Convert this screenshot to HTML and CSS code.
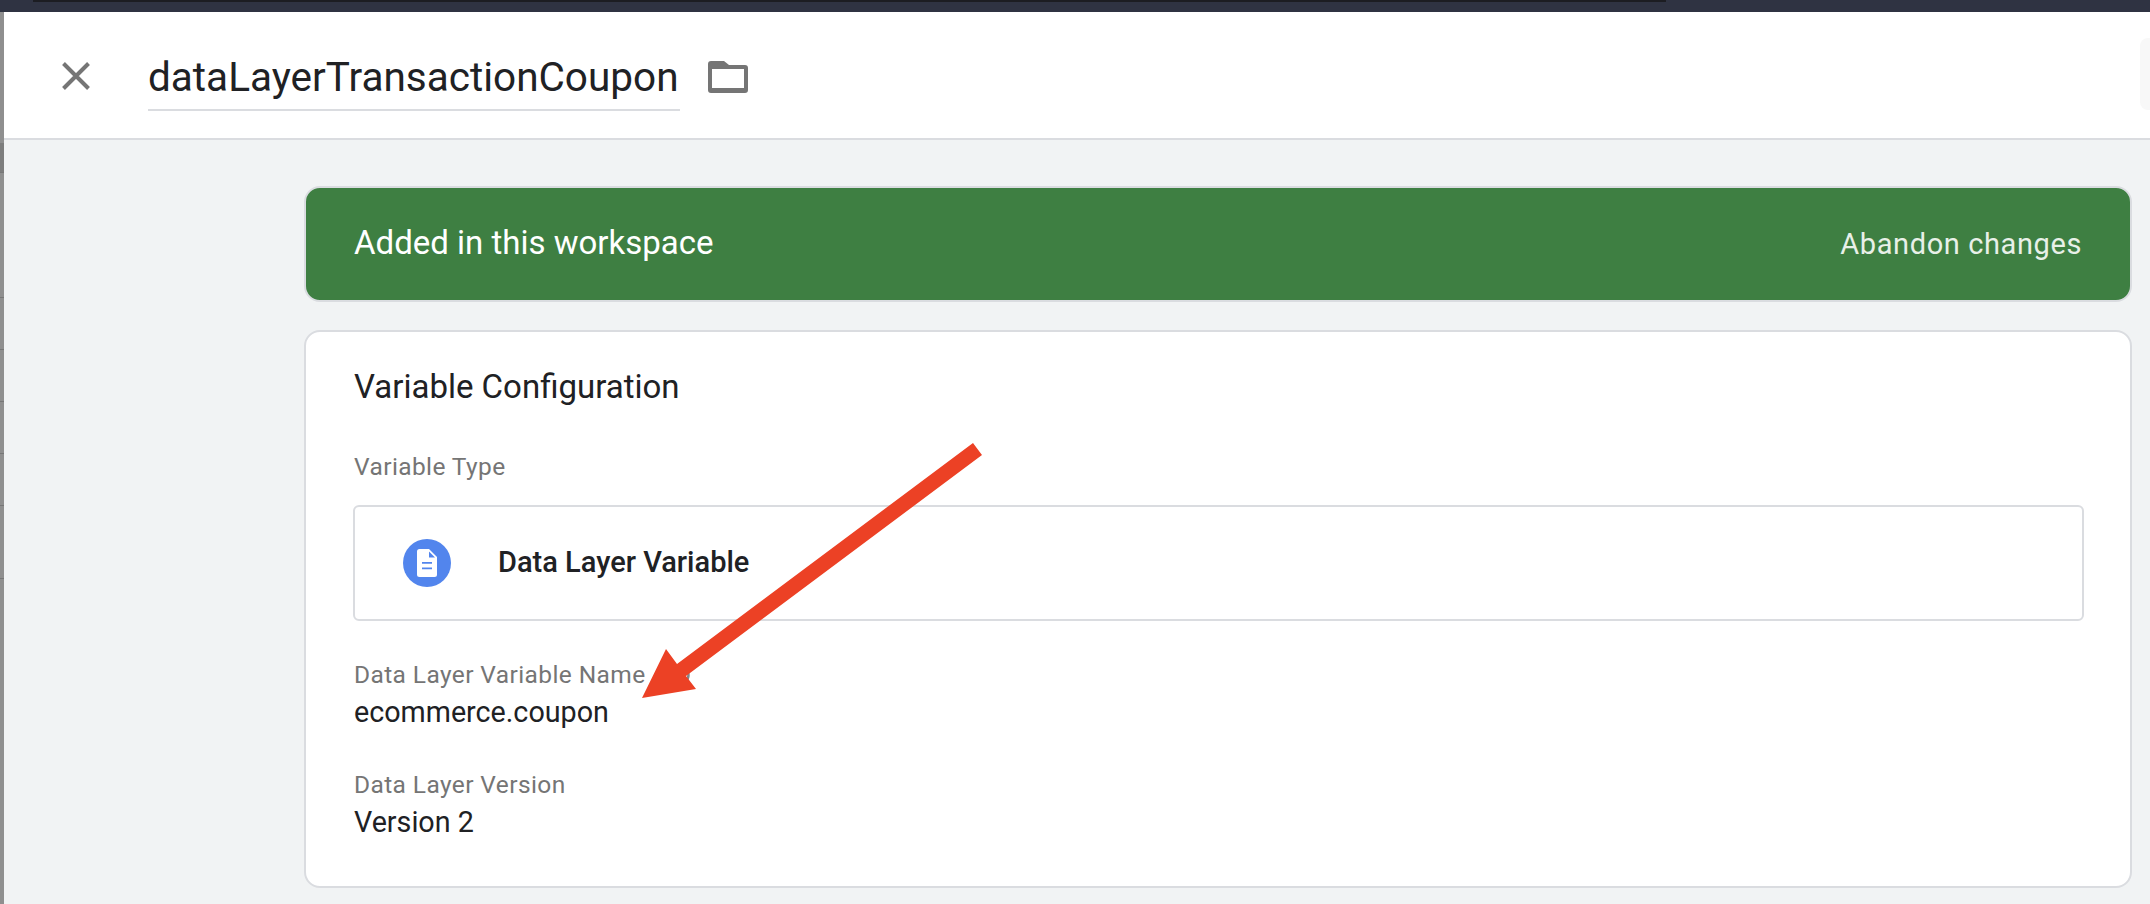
FILE: index.html
```html
<!DOCTYPE html>
<html lang="en">
<head>
    <meta charset="UTF-8">
    <meta name="viewport" content="width=device-width, initial-scale=1.0">
    <title>dataLayerTransactionCoupon</title>
    <link rel="stylesheet" href="styles.css">
</head>
<body>
    <div class="topbar"><div class="topbar-edge"></div></div>
    <div class="page">
        <div class="backdrop">
            <i></i><i></i><i></i><i></i><i></i><i></i><i></i>
        </div>
        <div class="sheet">
            <header class="sheet-header">
                <svg class="close-icon" viewBox="0 0 30 30">
                    <path d="M2.500 2.500 L27.500 27.500 M27.500 2.500 L2.500 27.500" fill="none" stroke="#757575" stroke-width="4"/>
                </svg>
                <div class="name-field">dataLayerTransactionCoupon</div>
                <svg class="folder-icon" viewBox="0 0 40 32">
                    <path d="M3 0 H16 L21 4 H37 A3 3 0 0 1 40 7 V29 A3 3 0 0 1 37 32 H3 A3 3 0 0 1 0 29 V3 A3 3 0 0 1 3 0 Z M4 8 V27 H36 V8 Z" fill="#757575" fill-rule="evenodd"/>
                </svg>
                <div class="save-stub"></div>
            </header>
            <main class="content">
                <section class="status-banner">
                    <span class="status-text">Added in this workspace</span>
                    <span class="status-action">Abandon changes</span>
                </section>
                <section class="card">
                    <h2 class="card-title">Variable Configuration</h2>
                    <div class="field-label type-label">Variable Type</div>
                    <div class="type-box">
                        <span class="type-icon">
                            <svg viewBox="0 0 20 28" width="20" height="28">
                                <path d="M2.500 0 H12 L20 8 V25.500 A2.500 2.500 0 0 1 17.500 28 H2.500 A2.500 2.500 0 0 1 0 25.500 V2.500 A2.500 2.500 0 0 1 2.500 0 Z M12 2.500 V8.500 H18 Z M5 13 V14.800 H15 V13 Z M5 18.500 V20.300 H15 V18.500 Z" fill="#fff" fill-rule="evenodd"/>
                            </svg>
                        </span>
                        <span class="type-name">Data Layer Variable</span>
                    </div>
                    <div class="field-label name-label">
                        Data Layer Variable Name
                        <svg class="help-icon" viewBox="0 0 22 22">
                            <circle cx="11" cy="11" r="9.500" fill="none" stroke="#80868b" stroke-width="2.500"/>
                        </svg>
                    </div>
                    <div class="field-value">ecommerce.coupon</div>
                    <div class="field-label version-label">Data Layer Version</div>
                    <div class="field-value">Version 2</div>
                </section>
            </main>
        </div>
        <!-- red annotation arrow drawn over the card -->
        <svg class="annotation" viewBox="0 0 2150 904">
            <path d="M973 443 L982 455 L686 676 L696 689 L642 698 L666 649 L677 664 Z" fill="#ec4125"/>
        </svg>
    </div>
</body>
</html>
```

FILE: styles.css
```css
* {
    margin: 0;
    padding: 0;
    box-sizing: border-box;
}

html, body {
    height: 100%;
}

body {
    display: flex;
    flex-direction: column;
    font-family: Roboto, "Liberation Sans", sans-serif;
    background: #f1f3f4;
    color: #202124;
    overflow: hidden;
}

.topbar {
    height: 12px;
    flex: none;
    background: #2f3342;
}

.topbar-edge {
    width: 1633px;
    height: 2px;
    margin-left: 33px;
    background: #1c1d22;
}

.page {
    position: relative;
    flex: 1;
    display: flex;
    min-height: 0;
}

.backdrop {
    width: 4px;
    flex: none;
    background: #8f8f8f;
    padding-top: 131px;
}

.backdrop i {
    display: block;
    height: 52px;
    border-bottom: 1px solid #777;
}

.backdrop i:first-child {
    height: 30px;
    background: #7d7d7d;
}

.backdrop i:nth-child(2) {
    height: 125px;
}

.backdrop i:last-child {
    height: 73px;
}

.sheet {
    flex: 1;
    display: flex;
    flex-direction: column;
    min-width: 0;
}

.sheet-header {
    height: 128px;
    flex: none;
    display: flex;
    align-items: center;
    background: #fff;
    border-bottom: 2px solid #dadce0;
    padding-left: 57px;
}

.close-icon {
    width: 30px;
    height: 30px;
    margin-top: 2px;
}

.name-field {
    width: 532px;
    height: 62px;
    margin-left: 57px;
    margin-top: 9px;
    font-size: 40.5px;
    line-height: 56px;
    white-space: nowrap;
    border-bottom: 2px solid #dadce0;
}

.folder-icon {
    width: 40px;
    height: 32px;
    margin-left: 28px;
    margin-top: 4px;
}

.save-stub {
    width: 10px;
    height: 72px;
    margin-left: auto;
    margin-top: -2px;
    background: #f8f8f8;
    border-radius: 8px 0 0 8px;
}

.content {
    padding: 46px 18px 0 300px;
}

.status-banner {
    height: 116px;
    display: flex;
    align-items: center;
    justify-content: space-between;
    padding: 0 48px 0 48px;
    background: #3e7f42;
    border: 2px solid #dadce0;
    border-radius: 16px;
    color: #fff;
}

.status-text {
    font-size: 33px;
    font-weight: 400;
    margin-top: -3px;
}

.status-action {
    font-size: 29px;
    color: #e8f0e8;
    letter-spacing: 0.6px;
}

.card {
    height: 558px;
    margin-top: 28px;
    padding: 35px 48px;
    background: #fff;
    border: 2px solid #dadce0;
    border-radius: 16px;
}

.card-title {
    font-size: 33px;
    font-weight: 400;
    line-height: 40px;
}

.field-label {
    font-size: 24.5px;
    line-height: 28px;
    color: #757575;
    letter-spacing: 0.4px;
}

.type-label {
    margin-top: 46px;
}

.type-box {
    height: 116px;
    margin: 24px -2px 0 -1px;
    display: flex;
    align-items: center;
    padding-left: 48px;
    border: 2px solid #dadce0;
    border-radius: 6px;
}

.type-icon {
    width: 48px;
    height: 48px;
    display: flex;
    align-items: center;
    justify-content: center;
    background: #5285ed;
    border-radius: 50%;
}

.type-name {
    margin-left: 47px;
    font-size: 29px;
    font-weight: 500;
    margin-top: -3px;
}

.name-label {
    display: flex;
    align-items: center;
    margin-top: 40px;
}

.help-icon {
    width: 22px;
    height: 22px;
    margin-left: 22px;
}

.field-value {
    font-size: 28.7px;
    line-height: 34px;
    margin-top: 6px;
}

.version-label {
    margin-top: 42px;
}

.annotation {
    position: absolute;
    left: 0;
    top: -12px;
    width: 2150px;
    height: 904px;
    pointer-events: none;
}
```
